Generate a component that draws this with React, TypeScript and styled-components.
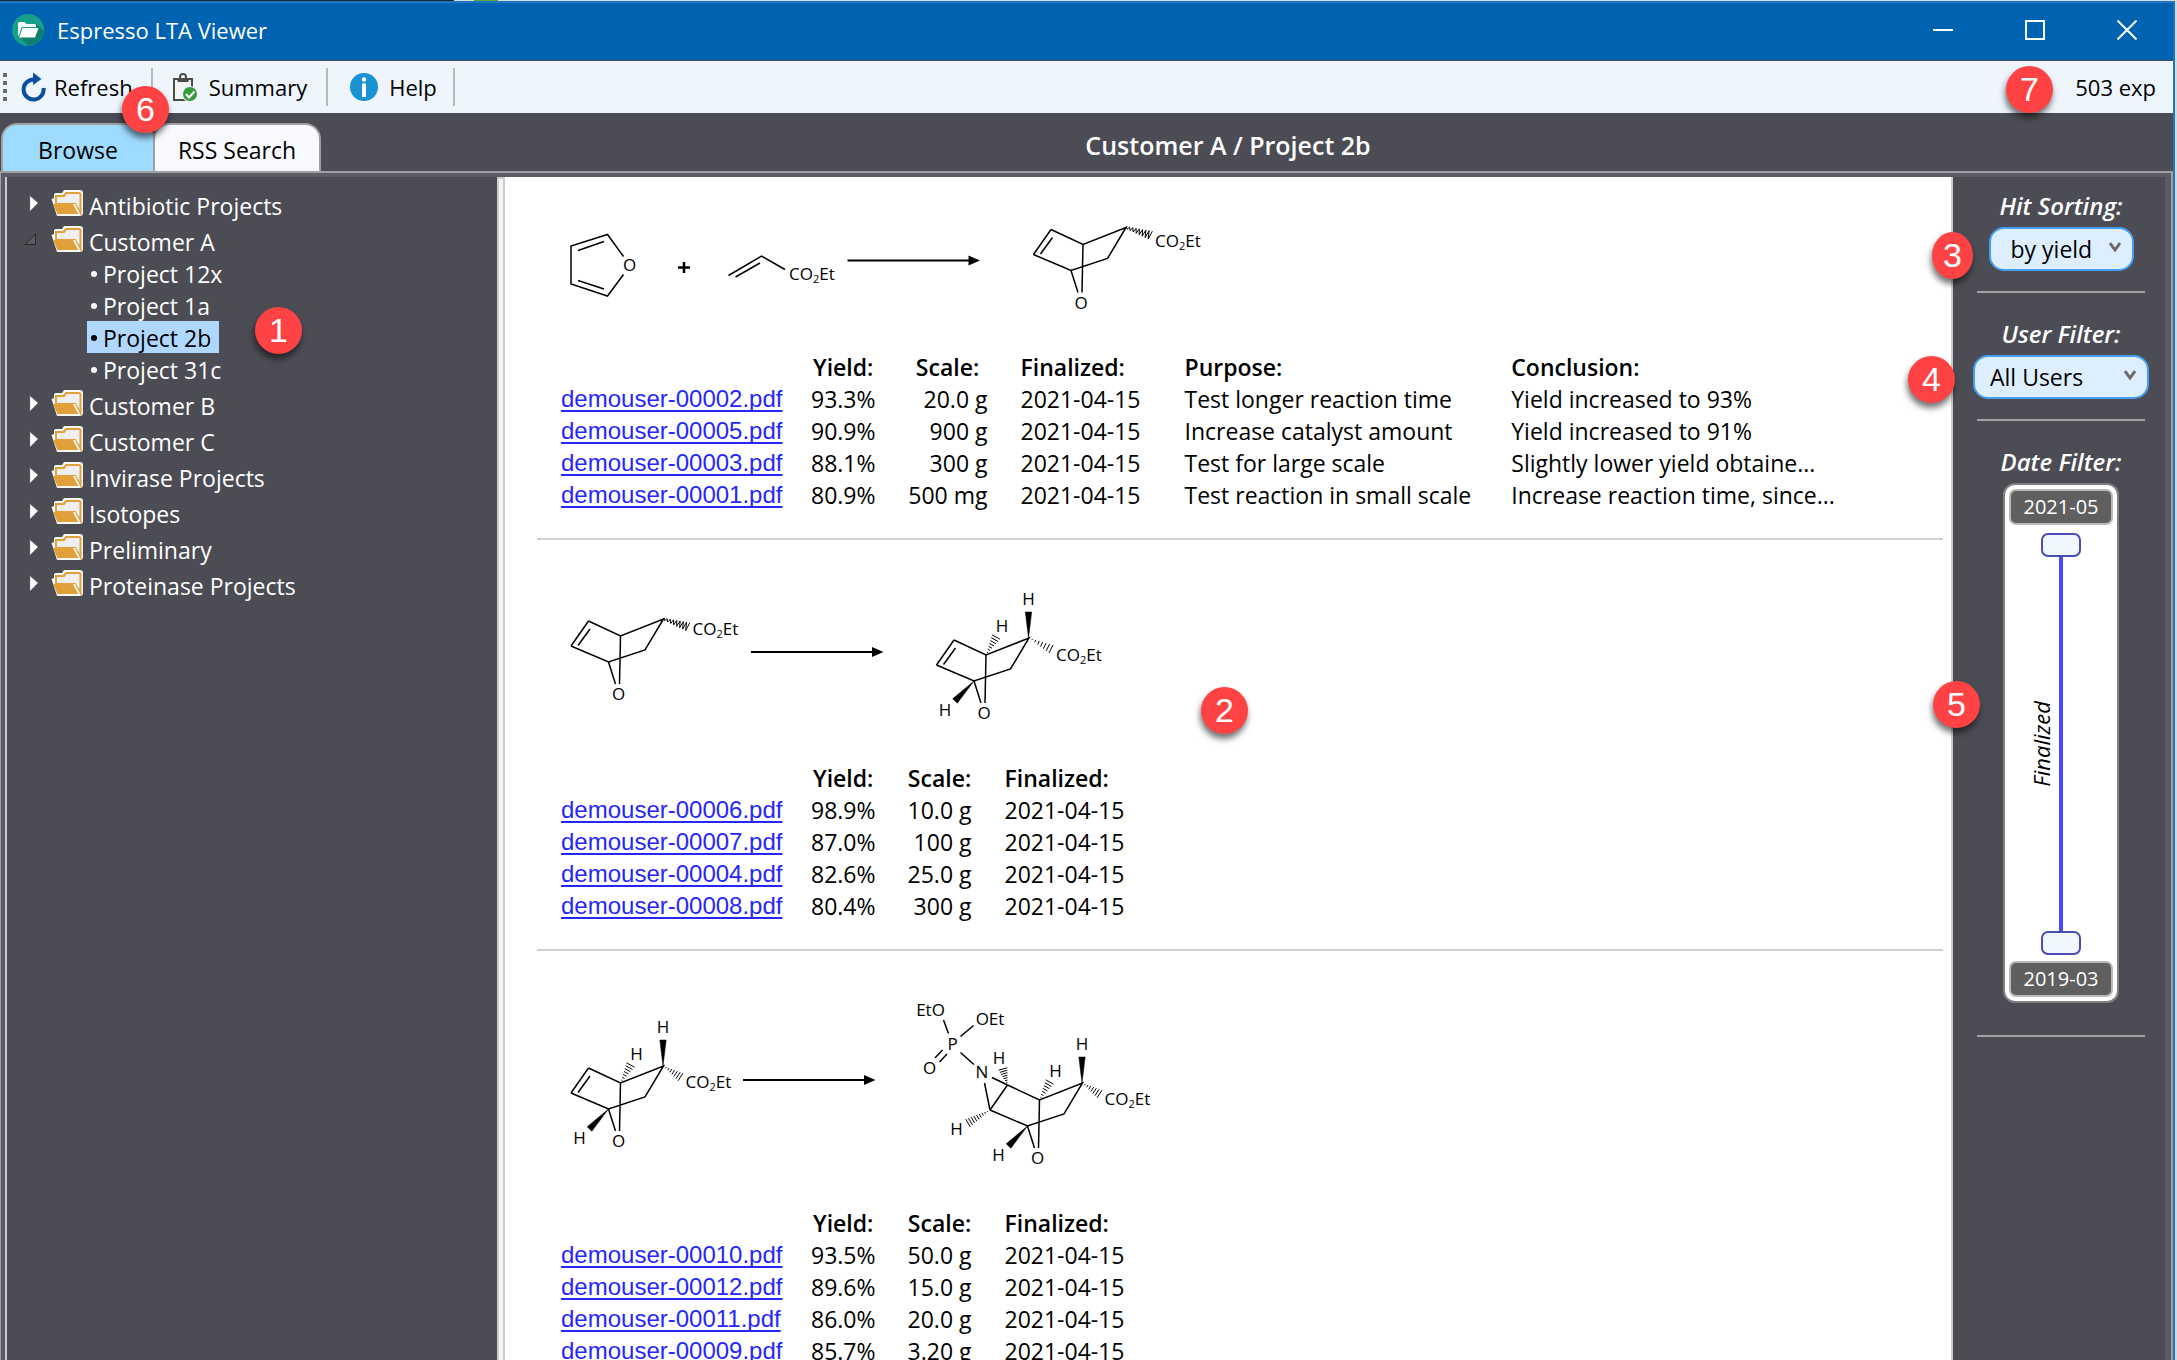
import React, { useState } from "react";
import styled, { createGlobalStyle, css } from "styled-components";

const ui = '"Open Sans", "Noto Sans", sans-serif';
const slate = "#4c4c54";

const GlobalStyle = createGlobalStyle`
  * { box-sizing: border-box; }
  body { margin: 0; font-family: ${ui}; font-size: 23px; line-height: 32px; color: #000; }
  button, select, input { font: inherit; color: inherit; margin: 0; }
  ul { list-style: none; margin: 0; padding: 0; }
`;

const Desktop = styled.div`
  position: relative;
  height: 100vh;
  overflow: hidden;
  padding: 1px 2px 0 0;
  background: linear-gradient(90deg, #23262b 454px, #d5d9de 454px 474px, #5fa83a 474px 498px, #d5d9de 498px);
`;

const Window = styled.div`
  height: 100%;
  display: flex;
  flex-direction: column;
  background: ${slate};
  border: solid #1a78c2;
  border-width: 2px 2px 0 0;
`;

const TitleBar = styled.header`
  height: 57px;
  flex: none;
  display: flex;
  align-items: center;
  padding: 0 0 3px 12px;
  background: #0063b1;
  color: #fff;
`;

const AppTitle = styled.h1`
  flex: 1;
  margin: 0 0 0 13px;
  font-size: 22px;
  font-weight: 400;
`;

const WindowButton = styled.button`
  width: 92px;
  height: 54px;
  display: flex;
  align-items: center;
  justify-content: center;
  padding: 0;
  border: 0;
  background: none;
`;

const Toolbar = styled.div`
  height: 52px;
  flex: none;
  display: flex;
  align-items: center;
  margin-top: 1px;
  padding-right: 17px;
  background: #eef5fd;
  font-size: 22px;
`;

const Grip = styled.span`
  width: 4px;
  height: 28px;
  margin-left: 3px;
  background: repeating-linear-gradient(#6a6a6a 0 4px, transparent 4px 8px);
`;

const ToolButton = styled.button<{ $lead: number; $trail: number }>`
  height: 38px;
  display: flex;
  align-items: center;
  gap: ${(p) => (p.$lead > 16 ? 11 : 8)}px;
  padding: 0 ${(p) => p.$trail}px 0 ${(p) => p.$lead}px;
  border: 0;
  border-right: 2px solid #b4bac2;
  background: none;
`;

const Count = styled.span`
  margin-left: auto;
`;

const TabBar = styled.div`
  height: 58px;
  flex: none;
  display: grid;
  grid-template-columns: 505px 1fr 222px;
  align-items: end;
`;

const Tabs = styled.div`
  display: flex;
  padding-left: 1px;
`;

const Tab = styled.button<{ $active?: boolean }>`
  height: 48px;
  width: ${(p) => (p.$active ? 154 : 168)}px;
  margin-right: -2px;
  padding: 4px 0 0;
  border: 2px solid #a0a0a0;
  border-bottom: 0;
  border-radius: 16px 16px 0 0;
  background: ${(p) => (p.$active ? "#9fdbff" : "#f8f8ff")};
`;

const Breadcrumb = styled.h2`
  margin: 0;
  padding-bottom: 10px;
  font-size: 25px;
  font-weight: 600;
  text-align: center;
  color: #fff;
`;

const Body = styled.div`
  flex: 1;
  min-height: 0;
  display: grid;
  grid-template-columns: 492px 8px minmax(0, 1fr) 212px;
  border: solid #a0a0a0;
  border-width: 2px 2px 0 1px;
  box-shadow: inset 4px 4px 0 #5c5c66, inset -6px 0 0 #5c5c66;
  padding: 4px 6px 0 4px;
`;

const TreePane = styled.nav`
  padding-top: 8px;
  border-left: 2px solid #c8c8c8;
  color: #fff;
`;

const FolderRow = styled.div`
  height: 36px;
  display: flex;
  align-items: center;
`;

const Toggle = styled.button`
  width: 44px;
  height: 36px;
  display: block;
  padding: 0;
  border: 0;
  background: none;
  svg { display: block; }
`;

const FolderLabel = styled.span`
  margin-left: 6px;
  padding-top: 5px;
`;

const ProjectRow = styled.li<{ $selected?: boolean }>`
  width: fit-content;
  height: 32px;
  display: flex;
  align-items: center;
  gap: 6px;
  margin-left: 80px;
  padding: 2px 8px 0 4px;
  ${(p) => p.$selected && css`background: #b0d8ff; color: #000;`}
  &::before {
    content: "";
    width: 6px;
    height: 6px;
    border-radius: 50%;
    background: currentColor;
  }
`;

const Splitter = styled.div`
  border: 2px solid #ccc;
  border-bottom: 0;
  background: #f4f4f6;
`;

const Results = styled.main`
  overflow: hidden;
  padding: 0 8px 0 32px;
  background: #fff;
  border-right: 2px solid #ccc;
`;

const Reaction = styled.section`
  padding: 13px 0 27px;
  border-bottom: 2px solid #d0d0d0;
`;

const Scheme = styled.svg`
  display: block;
  margin-left: 3px;
  fill: none;
  stroke: #000;
  stroke-width: 1.5;
  text {
    font: 17px ${ui};
    fill: #000;
    stroke: none;
  }
  .solid { fill: #000; }
`;

const HitTable = styled.table`
  margin-left: 24px;
  table-layout: fixed;
  border-collapse: collapse;
  white-space: nowrap;
`;

const Column = styled.col<{ $width: number }>`
  width: ${(p) => p.$width}px;
`;

const HeadCell = styled.th<{ $numeric?: boolean; $pad: number }>`
  height: 32px;
  padding: 0 0 0 ${(p) => p.$pad}px;
  font-weight: 600;
  text-align: ${(p) => (p.$numeric ? "center" : "left")};
`;

const Cell = styled.td<{ $numeric?: boolean; $pad: number }>`
  height: 32px;
  padding: 0 0 0 ${(p) => p.$pad}px;
  text-align: ${(p) => (p.$numeric ? "right" : "left")};
`;

const FileLink = styled.a`
  display: block;
  font: 24px/32px "Liberation Sans", Arial, sans-serif;
  color: #2626ff;
  text-decoration: underline 2px;
  text-underline-offset: 3px;
  text-decoration-skip-ink: none;
`;

const FilterPane = styled.aside`
  display: flex;
  flex-direction: column;
  align-items: center;
  padding: 0 20px 0 24px;
`;

const FilterGroup = styled.div`
  width: 168px;
  display: flex;
  flex-direction: column;
  align-items: center;
  padding: 14px 0 20px;
  border-bottom: 2px solid #a0a0a0;
  & + & { padding-top: 26px; }
`;

const FilterLabel = styled.label`
  height: 36px;
  font-weight: 600;
  font-style: italic;
  font-size: 24px;
  line-height: 30px;
  color: #fff;
`;

const SelectWrap = styled.div<{ $width: number }>`
  position: relative;
  width: ${(p) => p.$width}px;
  margin: 0 -4px;
  svg { position: absolute; right: 13px; top: 14px; pointer-events: none; }
`;

const Select = styled.select<{ $pad: number }>`
  appearance: none;
  display: block;
  width: 100%;
  height: 44px;
  padding: 0 0 0 ${(p) => p.$pad}px;
  border: 2px solid #479ff5;
  border-radius: 15px;
  background: #ddeeff;
  color: #000;
  outline: 0;
`;

const DateBox = styled.div`
  width: 116px;
  height: 520px;
  display: flex;
  flex-direction: column;
  align-items: center;
  padding: 4px;
  margin-bottom: 12px;
  border: 2px solid #808080;
  border-radius: 12px;
  background: #fff;
`;

const DateTag = styled.output`
  width: 104px;
  height: 36px;
  flex: none;
  border: 2px solid #b8b8b8;
  border-radius: 7px;
  background: #5f5f5f;
  color: #fff;
  font-size: 20px;
  line-height: 31px;
  text-align: center;
`;

const SliderArea = styled.div`
  flex: 1;
  min-height: 0;
  margin: 8px 0 6px;
  display: grid;
  grid-template-columns: 26px 40px 26px;
`;

const AxisName = styled.span`
  grid-area: 1 / 1;
  align-self: center;
  justify-self: end;
  margin-right: -16px;
  writing-mode: vertical-rl;
  transform: rotate(180deg);
  font-size: 22px;
  font-style: italic;
`;

const Track = styled.span`
  grid-area: 1 / 2;
  justify-self: center;
  width: 4px;
  margin: 12px 0;
  background: #4848ff;
`;

const Range = styled.input`
  grid-area: 1 / 2;
  appearance: none;
  writing-mode: vertical-lr;
  direction: rtl;
  width: 40px;
  height: 100%;
  background: none;
  pointer-events: none;
  &::-webkit-slider-thumb {
    appearance: none;
    box-sizing: border-box;
    width: 40px;
    height: 24px;
    border: 2px solid #4c4cb8;
    border-radius: 7px;
    background: #eff7ff;
    pointer-events: auto;
  }
`;

const Badge = styled.span<{ $top: number; $left?: number; $right?: number; $width?: number }>`
  position: absolute;
  top: ${(p) => p.$top}px;
  ${(p) => (p.$left !== undefined ? `left: ${p.$left}px;` : `right: ${p.$right}px;`)}
  width: ${(p) => p.$width ?? 47}px;
  height: 47px;
  border-radius: 50%;
  background: #ff4344;
  box-shadow: -1px 5px 6px rgba(0, 0, 0, 0.55);
  color: #fff;
  font: 34px/47px "Liberation Sans", Arial, sans-serif;
  text-align: center;
`;

/* ---------- icons ---------- */

const AppIcon = () => (
  <svg width="32" height="32" viewBox="0 0 32 32">
    <circle cx="16" cy="16" r="16" fill="#16a08a" />
    <path d="M25 10 31.5 17A16 16 0 0 1 17 32L7 23Z" fill="#0f7f6f" />
    <path d="M6 21V9.500q0-1.500 1.500-1.500h5l2 2h8q1.500 0 1.500 1.500V13H10.500L7 22Z" fill="#fff" />
    <path d="M10.500 14h16L23 23.500H7Z" fill="#fff" />
    <path d="M7 22.500 10 13.500H24.500" fill="none" stroke="#16a08a" strokeWidth="1" />
  </svg>
);

const RefreshIcon = () => (
  <svg width="25" height="30" viewBox="0 0 25 30">
    <path d="M15 7.500h-2.500A10 10 0 1 0 22.500 16" fill="none" stroke="#0b4f9e" strokeWidth="4" />
    <path d="M12 0.500 20.500 7 12 13Z" fill="#0b4f9e" />
  </svg>
);

const SummaryIcon = () => (
  <svg width="25" height="29" viewBox="0 0 25 29">
    <path d="M1 6v21h18V6Z" fill="#f3f3f3" stroke="#4a4a4a" strokeWidth="2" />
    <circle cx="10" cy="4" r="3" fill="#fff" stroke="#4a4a4a" strokeWidth="2" />
    <path d="M4.500 5h11v4h-11Z" fill="#4a4a4a" />
    <circle cx="17" cy="21" r="8" fill="#eef5fd" />
    <circle cx="17" cy="21" r="7" fill="#36993a" />
    <path d="m13 21 3 3.500 5.500-6" fill="none" stroke="#fff" strokeWidth="2" />
  </svg>
);

const HelpIcon = () => (
  <svg width="28" height="28" viewBox="0 0 28 28">
    <circle cx="14" cy="14" r="14" fill="#1a93d2" />
    <circle cx="14" cy="6.500" r="2.200" fill="#fff" />
    <path d="M12 10.500h4V24h-4Z" fill="#fff" />
  </svg>
);

const FolderIcon = () => (
  <svg width="32" height="26" viewBox="0 0 32 26">
    <path d="M0.500 9 3 8V5q0-2 2-2h6l2-3h16q3 0 3 3v20q0 3-3 3H6Z" fill="#f8f8f8" />
    <path d="M5 14V6h8l2-3h13q1.500 0 1.500 1.500V23L24 14Z" fill="#efeef2" stroke="#e1a03a" strokeWidth="2" />
    <path d="M2 14h20l5.500 10H6.500Z" fill="#e1a03a" />
    <path d="M22 14h2l5 9.500h-1.500Z" fill="#f8f8f8" />
  </svg>
);

const Chevron = () => (
  <svg width="12" height="12" viewBox="0 0 12 12">
    <path d="M1 2 6 9 11 2" fill="none" stroke="#6a6a6a" strokeWidth="3" />
  </svg>
);

const ToggleIcon = ({ open }: { open?: boolean }) => (
  <svg width="44" height="36" viewBox="0 0 44 36">
    {open ? (
      <path d="M18 23.500h10.500V13Z" fill="#5c5c5c" stroke="#262626" />
    ) : (
      <path d="M23 11 31 18 23 26Z" fill="#fff" stroke="#8a8a8a" strokeWidth="0.500" />
    )}
  </svg>
);

/* ---------- reaction schemes ---------- */

type XY = [number, number];

const Hash = ({ from, to, n = 7, spread = 4.5 }: { from: XY; to: XY; n?: number; spread?: number }) => {
  const dx = to[0] - from[0];
  const dy = to[1] - from[1];
  const len = Math.hypot(dx, dy);
  const parts: string[] = [];
  for (let i = 1; i <= n; i++) {
    const t = i / n;
    const h = spread * t;
    const x = from[0] + dx * t;
    const y = from[1] + dy * t;
    parts.push(`M${x - (dy / len) * h} ${y + (dx / len) * h}L${x + (dy / len) * h} ${y - (dx / len) * h}`);
  }
  return <path d={parts.join("")} strokeWidth="1" />;
};

const Squiggle = ({ from, to }: { from: XY; to: XY }) => {
  const dx = to[0] - from[0];
  const dy = to[1] - from[1];
  const len = Math.hypot(dx, dy);
  const n = 16;
  const points: string[] = [];
  for (let i = 0; i <= n; i++) {
    const t = i / n;
    const h = (i % 2 ? 1 : -1) * (1 + 3.5 * t);
    points.push(`${from[0] + dx * t - (dy / len) * h},${from[1] + dy * t + (dx / len) * h}`);
  }
  return <polyline points={points.join(" ")} strokeWidth="1" />;
};

const Wedge = ({ from, to }: { from: XY; to: XY }) => {
  const dx = to[0] - from[0];
  const dy = to[1] - from[1];
  const len = Math.hypot(dx, dy);
  const ox = (-dy / len) * 3.2;
  const oy = (dx / len) * 3.2;
  return (
    <path
      className="solid"
      strokeWidth="0.500"
      d={`M${from[0]} ${from[1]}L${to[0] + ox} ${to[1] + oy}L${to[0] - ox} ${to[1] - oy}Z`}
    />
  );
};

const Atom = ({ x, y, children }: { x: number; y: number; children: React.ReactNode }) => (
  <text x={x} y={y + 6} textAnchor="middle">{children}</text>
);

const Ester = ({ x, y }: { x: number; y: number }) => (
  <text x={x} y={y + 6}>
    CO<tspan fontSize="11" dy="3">2</tspan><tspan dy="-3">Et</tspan>
  </text>
);

const Arrow = ({ x, y }: { x: number; y: number }) => (
  <g>
    <path d={`M${x} ${y}h124`} strokeWidth="2" />
    <path className="solid" stroke="none" d={`M${x + 121} ${y - 5}l11.500 5-11.500 5Z`} />
  </g>
);

const Bicycle = ({ x, y, stereo, fused, esterX, esterY }: {
  x: number; y: number; stereo?: boolean; fused?: boolean; esterX: number; esterY: number;
}) => (
  <g transform={`translate(${x} ${y})`}>
    <path d="M-32-15 0 0 43-17 24.500 14-12 26-49.500 10M0 0-1 48M-12 26-5 48" />
    <path d="M-49.500 10-32-15" />
    {!fused && <path d="M-42.500 9.500-30.500-7" />}
    <Atom x={-2} y={58}>O</Atom>
    {stereo ? (
      <g>
        <Wedge from={[42.5, -17]} to={[42.5, -43]} />
        <Atom x={42.5} y={-56}>H</Atom>
        <Hash from={[0, 0]} to={[10, -18]} />
        <Atom x={16} y={-29}>H</Atom>
        <Hash from={[43, -17]} to={[esterX - 5, -6]} />
        <Wedge from={[-12, 26]} to={[-31, 46]} />
        <Atom x={-41} y={55}>H</Atom>
      </g>
    ) : (
      <Squiggle from={[43, -17]} to={[68, -9]} />
    )}
    <Ester x={esterX} y={esterY} />
  </g>
);

const SchemeOne = () => (
  <Scheme width="700" height="161" viewBox="0 0 700 161">
    <path d="M83.500 66.500 67.500 44.500 31 56V94L67.500 106 83.500 84.500M38 60.500 64 51.500M38 90.500 64 99" />
    <Atom x={89.5} y={75}>O</Atom>
    <path d="M138 77.500h12M144 72v11" strokeWidth="2.500" />
    <path d="M188.500 85.500 221.500 66 245 79.500M195.500 87 220 73" />
    <Ester x={249} y={84} />
    <Arrow x={307.5} y={70.5} />
    <Bicycle x={543} y={54.5} esterX={72} esterY={-4} />
  </Scheme>
);

const SchemeTwo = () => (
  <Scheme width="700" height="209" viewBox="0 -17 700 209">
    <Bicycle x={80.5} y={66} esterX={72} esterY={-7} />
    <Arrow x={211} y={82} />
    <Bicycle x={446} y={85} stereo esterX={70} esterY={0} />
  </Scheme>
);

const SchemeThree = () => (
  <Scheme width="700" height="243" viewBox="0 -6 700 243">
    <Bicycle x={80.5} y={113} stereo esterX={65} esterY={-1} />
    <Arrow x={203} y={110} />
    <Bicycle x={499.500} y={130} stereo fused esterX={65} esterY={-1} />
    <Atom x={442} y={102}>N</Atom>
    <path d="M452 107.500 467.500 115M444.500 113 450 140" />
    <Hash from={[467.5, 115]} to={[463, 99]} />
    <Atom x={459} y={88}>H</Atom>
    <Hash from={[450, 140]} to={[428, 153]} n={9} />
    <Atom x={416.5} y={158.5}>H</Atom>
    <Atom x={412.5} y={74}>P</Atom>
    <path d="M420.500 82.500 434 94.500M403.500 50 408.500 63.500M433.500 55.500 420.500 66.500M402.500 80 395 88M407 84 399.500 92" />
    <Atom x={390.5} y={40}>EtO</Atom>
    <Atom x={450} y={49}>OEt</Atom>
    <Atom x={389.5} y={98}>O</Atom>
  </Scheme>
);

/* ---------- data ---------- */

type Hit = string[];

const reactions: { scheme: React.FC; scaleWidth: number; hits: Hit[] }[] = [
  {
    scheme: SchemeOne,
    scaleWidth: 112,
    hits: [
      ["demouser-00002.pdf", "93.3%", "20.0 g", "2021-04-15", "Test longer reaction time", "Yield increased to 93%"],
      ["demouser-00005.pdf", "90.9%", "900 g", "2021-04-15", "Increase catalyst amount", "Yield increased to 91%"],
      ["demouser-00003.pdf", "88.1%", "300 g", "2021-04-15", "Test for large scale", "Slightly lower yield obtaine..."],
      ["demouser-00001.pdf", "80.9%", "500 mg", "2021-04-15", "Test reaction in small scale", "Increase reaction time, since..."],
    ],
  },
  {
    scheme: SchemeTwo,
    scaleWidth: 96,
    hits: [
      ["demouser-00006.pdf", "98.9%", "10.0 g", "2021-04-15"],
      ["demouser-00007.pdf", "87.0%", "100 g", "2021-04-15"],
      ["demouser-00004.pdf", "82.6%", "25.0 g", "2021-04-15"],
      ["demouser-00008.pdf", "80.4%", "300 g", "2021-04-15"],
    ],
  },
  {
    scheme: SchemeThree,
    scaleWidth: 96,
    hits: [
      ["demouser-00010.pdf", "93.5%", "50.0 g", "2021-04-15"],
      ["demouser-00012.pdf", "89.6%", "15.0 g", "2021-04-15"],
      ["demouser-00011.pdf", "86.0%", "20.0 g", "2021-04-15"],
      ["demouser-00009.pdf", "85.7%", "3.20 g", "2021-04-15"],
    ],
  },
];

const headings = ["", "Yield:", "Scale:", "Finalized:", "Purpose:", "Conclusion:"];
const pads = [0, 28, 32, 33, 40, 40];
const isNumeric = (i: number) => i === 1 || i === 2;

const folders: { name: string; projects?: string[] }[] = [
  { name: "Antibiotic Projects" },
  { name: "Customer A", projects: ["Project 12x", "Project 1a", "Project 2b", "Project 31c"] },
  { name: "Customer B" },
  { name: "Customer C" },
  { name: "Invirase Projects" },
  { name: "Isotopes" },
  { name: "Preliminary" },
  { name: "Proteinase Projects" },
];

const monthLabel = (n: number) => {
  const m = 2 + n;
  return `${2019 + Math.floor(m / 12)}-${String((m % 12) + 1).padStart(2, "0")}`;
};

const Hits = ({ hits, scaleWidth }: { hits: Hit[]; scaleWidth: number }) => {
  const widths = [222, 92, scaleWidth, 157, 321, 380].slice(0, hits[0].length);
  return (
    <HitTable>
      <colgroup>{widths.map((w, i) => <Column key={i} $width={w} />)}</colgroup>
      <thead>
        <tr>
          {widths.map((_, i) => (
            <HeadCell key={i} $pad={pads[i]} $numeric={isNumeric(i)}>{headings[i]}</HeadCell>
          ))}
        </tr>
      </thead>
      <tbody>
        {hits.map((hit) => (
          <tr key={hit[0]}>
            {hit.map((value, i) => (
              <Cell key={i} $pad={pads[i]} $numeric={isNumeric(i)}>
                {i === 0 ? <FileLink href={`#${value}`}>{value}</FileLink> : value}
              </Cell>
            ))}
          </tr>
        ))}
      </tbody>
    </HitTable>
  );
};

export default function App() {
  const [selected, setSelected] = useState("Project 2b");
  const [from, setFrom] = useState(0);
  const [to, setTo] = useState(26);

  return (
    <>
      <GlobalStyle />
      <Desktop>
        <Window>
          <TitleBar>
            <AppIcon />
            <AppTitle>Espresso LTA Viewer</AppTitle>
            <WindowButton aria-label="Minimize">
              <svg width="20" height="20"><path d="M0 10h20" stroke="#fff" strokeWidth="2" /></svg>
            </WindowButton>
            <WindowButton aria-label="Maximize">
              <svg width="20" height="20"><path d="M1 1h18v18H1Z" fill="none" stroke="#fff" strokeWidth="2" /></svg>
            </WindowButton>
            <WindowButton aria-label="Close">
              <svg width="20" height="20"><path d="M0.500 0.500 19.500 19.500M19.500 0.500 0.500 19.500" stroke="#fff" strokeWidth="2" /></svg>
            </WindowButton>
          </TitleBar>

          <Toolbar>
            <Grip />
            <ToolButton $lead={14} $trail={18}><RefreshIcon />Refresh</ToolButton>
            <ToolButton $lead={20} $trail={19}><SummaryIcon />Summary</ToolButton>
            <ToolButton $lead={22} $trail={16}><HelpIcon />Help</ToolButton>
            <Count>503 exp</Count>
          </Toolbar>

          <TabBar>
            <Tabs role="tablist">
              <Tab role="tab" aria-selected="true" $active>Browse</Tab>
              <Tab role="tab" aria-selected="false">RSS Search</Tab>
            </Tabs>
            <Breadcrumb>Customer A / Project 2b</Breadcrumb>
          </TabBar>

          <Body>
            <TreePane>
              {folders.map((folder) => (
                <div key={folder.name}>
                  <FolderRow>
                    <Toggle aria-label={`Toggle ${folder.name}`}><ToggleIcon open={!!folder.projects} /></Toggle>
                    <FolderIcon />
                    <FolderLabel>{folder.name}</FolderLabel>
                  </FolderRow>
                  {folder.projects && (
                    <ul>
                      {folder.projects.map((p) => (
                        <ProjectRow key={p} $selected={p === selected} onClick={() => setSelected(p)}>{p}</ProjectRow>
                      ))}
                    </ul>
                  )}
                </div>
              ))}
            </TreePane>
            <Splitter />
            <Results>
              {reactions.map(({ scheme: Drawing, scaleWidth, hits }) => (
                <Reaction key={hits[0][0]}>
                  <Drawing />
                  <Hits hits={hits} scaleWidth={scaleWidth} />
                </Reaction>
              ))}
            </Results>
            <FilterPane>
              <FilterGroup>
                <FilterLabel htmlFor="sorting">Hit Sorting:</FilterLabel>
                <SelectWrap $width={145}>
                  <Select id="sorting" $pad={20}><option>by yield</option><option>by scale</option></Select>
                  <Chevron />
                </SelectWrap>
              </FilterGroup>
              <FilterGroup>
                <FilterLabel htmlFor="user">User Filter:</FilterLabel>
                <SelectWrap $width={176}>
                  <Select id="user" $pad={15}><option>All Users</option></Select>
                  <Chevron />
                </SelectWrap>
              </FilterGroup>
              <FilterGroup>
                <FilterLabel htmlFor="date-to">Date Filter:</FilterLabel>
                <DateBox>
                  <DateTag>{monthLabel(to)}</DateTag>
                  <SliderArea>
                    <AxisName>Finalized</AxisName>
                    <Track />
                    <Range id="date-to" type="range" min={0} max={26} value={to}
                      onChange={(e) => setTo(Math.max(from, +e.target.value))} />
                    <Range aria-label="Earliest month" type="range" min={0} max={26} value={from}
                      onChange={(e) => setFrom(Math.min(to, +e.target.value))} />
                  </SliderArea>
                  <DateTag>{monthLabel(from)}</DateTag>
                </DateBox>
              </FilterGroup>
            </FilterPane>
          </Body>
        </Window>

        <Badge $top={307} $left={255}>1</Badge>
        <Badge $top={687} $left={1201}>2</Badge>
        <Badge $top={232} $right={204} $width={41}>3</Badge>
        <Badge $top={356} $right={222}>4</Badge>
        <Badge $top={681} $right={197}>5</Badge>
        <Badge $top={86} $left={122}>6</Badge>
        <Badge $top={66} $right={124}>7</Badge>
      </Desktop>
    </>
  );
}
